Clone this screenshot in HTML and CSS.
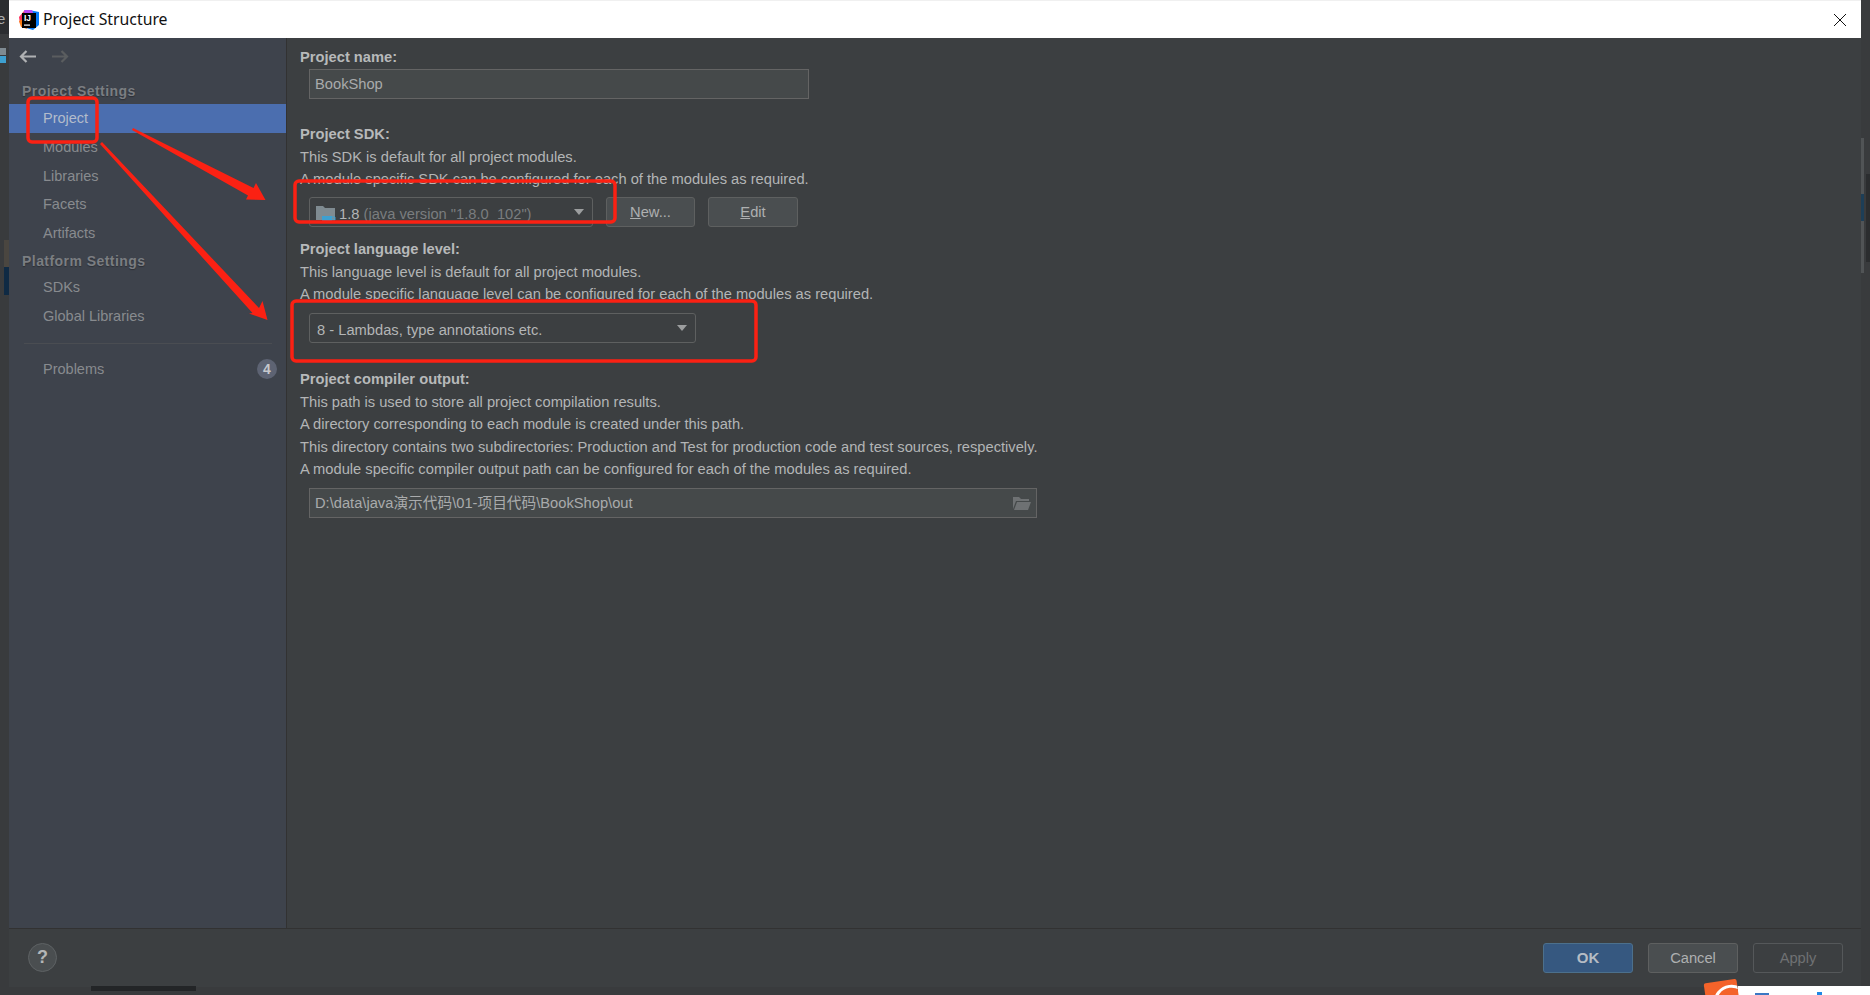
FILE: index.html
```html
<!DOCTYPE html>
<html lang="en">
<head>
<meta charset="utf-8">
<title>Project Structure</title>
<link rel="stylesheet" href="styles.css">
</head>
<body>
<div class="screen">
  <div class="dialog">
    <header class="titlebar">
      <svg class="logo" width="20" height="20" viewBox="0 0 20 20">
        <polygon points="0,7 5,1 11,2 7,12 1,14" fill="#fe315d"/>
        <polygon points="0,11 6,8 8,19 2,17" fill="#f97a12"/>
        <polygon points="10,0 20,2 20,15 14,20 7,18" fill="#087cfa"/>
        <polygon points="5,0 13,0 15,5 6,7" fill="#b74af7"/>
        <rect x="3" y="3" width="14" height="15" fill="#000"/>
        <text x="5" y="11" class="logo-text">IJ</text>
        <rect x="5" y="14.5" width="6" height="1.2" fill="#fff"/>
      </svg>
      <span class="title-text">Project Structure</span>
      <svg class="close" width="12" height="12" viewBox="0 0 12 12"><path d="M0 0L12 12M12 0L0 12" stroke="#111" stroke-width="1" fill="none"/></svg>
    </header>
    <div class="main">
      <nav class="sidebar">
        <div class="nav-toolbar">
          <svg width="17" height="13" viewBox="0 0 17 13"><path d="M17 6.5H2M7.5 1L2 6.5L7.5 12" stroke="#afb1b3" stroke-width="2.2" fill="none"/></svg>
          <svg width="17" height="13" viewBox="0 0 17 13"><path d="M0 6.5H15M9.5 1L15 6.5L9.5 12" stroke="#5a5d5f" stroke-width="2.2" fill="none"/></svg>
        </div>
        <div class="nav-heading">Project Settings</div>
        <div class="nav-item selected">Project</div>
        <div class="nav-item">Modules</div>
        <div class="nav-item">Libraries</div>
        <div class="nav-item">Facets</div>
        <div class="nav-item">Artifacts</div>
        <div class="nav-heading second">Platform Settings</div>
        <div class="nav-item">SDKs</div>
        <div class="nav-item">Global Libraries</div>
        <div class="nav-sep"></div>
        <div class="nav-item problems"><span>Problems</span><span class="badge">4</span></div>
      </nav>
      <section class="content">
        <div class="label">Project name:</div>
        <div class="field name-field">BookShop</div>

        <div class="label sdk-label">Project SDK:</div>
        <p class="desc">This SDK is default for all project modules.<br>A module specific SDK can be configured for each of the modules as required.</p>
        <div class="sdk-row">
          <div class="combo sdk-combo">
            <svg class="jdk-icon" width="20" height="18" viewBox="0 0 20 18">
              <path d="M0 0H7L9 2H19V14H0Z" fill="#7f8b91"/>
              <path d="M6 10H16V14Q16 17 13 17H9Q6 17 6 14Z" fill="#3ea0d0"/>
              <path d="M16 11H19V14H16" stroke="#3ea0d0" fill="none"/>
            </svg>
            <span class="combo-text">1.8 <span class="dim">(java version "1.8.0_102")</span></span>
            <i class="caret"></i>
          </div>
          <button class="btn"><u>N</u>ew...</button>
          <button class="btn"><u>E</u>dit</button>
        </div>

        <div class="label lang-label">Project language level:</div>
        <p class="desc">This language level is default for all project modules.<br>A module specific language level can be configured for each of the modules as required.</p>
        <div class="combo lang-combo">
          <span class="combo-text">8 - Lambdas, type annotations etc.</span>
          <i class="caret"></i>
        </div>

        <div class="label output-label">Project compiler output:</div>
        <p class="desc wide">This path is used to store all project compilation results.<br>A directory corresponding to each module is created under this path.<br>This directory contains two subdirectories: Production and Test for production code and test sources, respectively.<br>A module specific compiler output path can be configured for each of the modules as required.</p>
        <div class="field output-field">
          <span>D:\data\java演示代码\01-项目代码\BookShop\out</span>
          <svg width="19" height="14" viewBox="0 0 19 14"><path d="M1 1H7L9 3H17V5H4L1 13Z M5 6H19L16 14H2Z" fill="#6e7173"/></svg>
        </div>
      </section>
    </div>
    <footer class="footer">
      <div class="help">?</div>
      <div class="actions">
        <button class="btn primary">OK</button>
        <button class="btn">Cancel</button>
        <button class="btn disabled">Apply</button>
      </div>
    </footer>
  </div>

  <div class="bg-bits">
    <span class="bit top-left"></span>
    <span class="bit e">e</span>
    <span class="bit b1"></span>
    <span class="bit b2"></span>
    <span class="bit b3"></span>
    <span class="bit b4"></span>
    <span class="bit r1"></span>
    <span class="bit r2"></span>
    <span class="bit r3"></span>
    <span class="bit bar"></span>
    <span class="bit white"></span>
    <span class="bit blue1"></span>
    <span class="bit blue2"></span>
    <span class="bit orange"></span>
  </div>

  <svg class="annotations" width="1870" height="995" viewBox="0 0 1870 995">
    <g fill="none" stroke="#fb2113" stroke-width="3.5">
      <rect x="28" y="98" width="69" height="44" rx="4"/>
      <rect x="295" y="181" width="320" height="41" rx="4"/>
      <rect x="292" y="301" width="464" height="60" rx="4"/>
    </g>
    <g fill="#fb2113">
      <polygon points="133,128 253.5,188 256,183 265.5,200 246,199.5 248,195.5 132,130"/>
      <polygon points="102,142 259,308 262.5,301 267.5,320 249,313.5 252.5,313 100,144"/>
    </g>
  </svg>
</div>
</body>
</html>
```
FILE: styles.css
```css
* { box-sizing: border-box; }
html, body { margin: 0; padding: 0; }
body { background: #393b3d; font-family: "Liberation Sans", Arial, sans-serif; }

.screen {
  position: relative;
  width: 1870px;
  height: 995px;
  overflow: hidden;
  background: #393b3d;
}

.dialog {
  margin-left: 9px;
  width: 1852px;
  height: 987px;
  display: flex;
  flex-direction: column;
  background: #3c3f41;
}

/* title bar */
.titlebar {
  flex: none;
  height: 38px;
  background: #fff;
  border-top: 1px solid #f0f0f0;
  display: flex;
  align-items: center;
  padding: 0 15px 0 10px;
  color: #111;
}
.logo { flex: none; margin-right: 4px; }
.logo-text { font: bold 8.5px "Liberation Sans", sans-serif; fill: #fff; }
.title-text { font: 15.8px/20px "Noto Sans", sans-serif; flex: 1; margin-top: -1px; }
.close { flex: none; }

/* main */
.main {
  flex: 1;
  min-height: 0;
  display: flex;
  border-bottom: 1px solid #323232;
}

.sidebar {
  flex: none;
  width: 278px;
  background: #3e434c;
  border-right: 1px solid #323232;
  font-size: 14.5px;
  color: #888b8f;
}
.nav-toolbar {
  height: 36px;
  padding: 12px 0 0 10px;
  display: flex;
  gap: 16px;
}
.nav-heading {
  height: 26px;
  margin-top: 4px;
  padding-left: 13px;
  line-height: 27px;
  font-size: 14px;
  font-weight: bold;
  letter-spacing: 0.45px;
  color: #7b7e82;
  text-shadow: 0 1px 1px #2d3036;
}
.nav-heading.second { margin-top: 0; height: 25px; line-height: 26px; }
.nav-item {
  height: 28.8px;
  line-height: 28.8px;
  padding-left: 34px;
}
.nav-item.selected { background: #4b6eaf; color: #b3bccb; }
.nav-sep {
  height: 24.4px;
  padding-top: 12px;
  margin: 0 14px 0 15px;
}
.nav-sep::before {
  content: "";
  display: block;
  height: 1px;
  background: #4a4d52;
}
.problems {
  display: flex;
  justify-content: space-between;
  align-items: center;
  padding-right: 9px;
}
.badge {
  width: 20px;
  height: 20px;
  border-radius: 50%;
  background: #5d6373;
  color: #c6c8cc;
  font-weight: bold;
  font-size: 14px;
  line-height: 20px;
  text-align: center;
}

/* content */
.content {
  flex: 1;
  padding: 8px 0 0 13px;
  font-size: 14.7px;
  color: #b3b5b6;
}
.label {
  height: 22px;
  line-height: 22px;
  font-weight: bold;
  color: #b7b9ba;
}
.desc { margin: 2px 0 0; line-height: 21.5px; }
.desc.wide { margin-top: 1px; line-height: 22.4px; }
.sdk-label { margin-top: 24px; }
.lang-label { margin-top: 11px; }
.output-label { margin-top: 25px; }

.field {
  margin: 1px 0 0 9px;
  height: 30px;
  background: #45494a;
  border: 1px solid #646464;
  line-height: 28px;
  padding-left: 5px;
  color: #a9abac;
}
.name-field { width: 500px; }
.output-field {
  width: 728px;
  margin-top: 7px;
  padding: 0 5px 0 5px;
  display: flex;
  justify-content: space-between;
  align-items: center;
  font-family: "Liberation Sans", "Noto Sans CJK SC", sans-serif;
}

.sdk-row {
  display: flex;
  margin: 7px 0 0 9px;
  gap: 13px;
}
.combo {
  position: relative;
  height: 30px;
  border: 1px solid #5e6060;
  border-radius: 3px;
  background: #3c3f41;
  display: flex;
  align-items: center;
  color: #b3b5b6;
}
.combo-text { padding-top: 3px; white-space: nowrap; }
.dim { color: #7a7d7f; }
.sdk-combo { width: 284px; margin-right: 0; padding-left: 6px; }
.jdk-icon { flex: none; margin: 5px 3px 0 0; }
.lang-combo { width: 387px; margin: 8px 0 0 9px; padding-left: 7px; }
.lang-combo .combo-text { padding-top: 4px; }
.caret {
  position: absolute;
  right: 8px;
  top: 11px;
  width: 0;
  height: 0;
  border-left: 5.5px solid transparent;
  border-right: 5.5px solid transparent;
  border-top: 6px solid #9c9e9f;
}

.btn {
  width: 90px;
  height: 30px;
  padding: 0;
  border: 1px solid #5e6060;
  border-radius: 3px;
  background: #4a4e50;
  color: #aeb0b1;
  font: 14.7px/28px "Liberation Sans", sans-serif;
  text-align: center;
}
.sdk-row .btn:nth-of-type(1) { width: 89px; }
.sdk-row .btn:nth-of-type(2) { width: 90px; }
.btn.primary {
  background: #365880;
  border-color: #4c708c;
  color: #b5bcc4;
  font-weight: bold;
  font-size: 15px;
}
.btn.disabled {
  background: transparent;
  border-color: #55585a;
  color: #6f7173;
}

/* footer */
.footer {
  flex: none;
  height: 58px;
  padding: 14px 18px 0;
  display: flex;
  justify-content: space-between;
  align-items: flex-start;
  background: #3c3f41;
}
.help {
  width: 29px;
  height: 29px;
  margin-left: 1px;
  border-radius: 50%;
  border: 1px solid #5e6264;
  background: #4a4e50;
  color: #b4b6b7;
  font-weight: bold;
  font-size: 18px;
  line-height: 27px;
  text-align: center;
}
.actions { display: flex; gap: 15px; }

/* bits of the window behind the dialog */
.bg-bits { position: absolute; inset: 0; pointer-events: none; }
.bit { position: absolute; display: block; }
.top-left { left: 0; top: 0; width: 9px; height: 34px; background: #2b2d30; }
.e { left: -3px; top: 9px; font: 15px/20px "Liberation Sans", sans-serif; color: #a9abac; }
.b1 { left: 0; top: 48px; width: 6px; height: 7px; background: #7f8b91; }
.b2 { left: 0; top: 56px; width: 6px; height: 7px; background: #3ea0d0; }
.b3 { left: 4px; top: 240px; width: 5px; height: 27px; background: #4a4640; }
.b4 { left: 4px; top: 267px; width: 5px; height: 28px; background: #0f2a44; }
.r1 { left: 1861px; top: 138px; width: 3px; height: 135px; background: #515456; }
.r2 { left: 1861px; top: 194px; width: 3px; height: 27px; background: #1d3e57; }
.r3 { left: 1866px; top: 174px; width: 4px; height: 88px; background: #2b2d2f; }
.bar { left: 91px; top: 986px; width: 105px; height: 5px; background: #232527; }
.white { left: 1738px; top: 986px; width: 132px; height: 9px; background: #fff; }
.blue1 { left: 1755px; top: 993px; width: 14px; height: 2px; background: #3b78c4; }
.blue2 { left: 1817px; top: 992px; width: 5px; height: 3px; background: #1e88e5; }
.orange {
  left: 1705px;
  top: 981px;
  width: 33px;
  height: 22px;
  background: #f4632a;
  transform: rotate(-8deg);
  border-radius: 2px;
  overflow: hidden;
}
.orange::after {
  content: "";
  position: absolute;
  left: 7px;
  top: 5px;
  width: 30px;
  height: 30px;
  border: 3px solid #fff;
  border-radius: 50%;
}

.annotations { position: absolute; left: 0; top: 0; pointer-events: none; }
```
